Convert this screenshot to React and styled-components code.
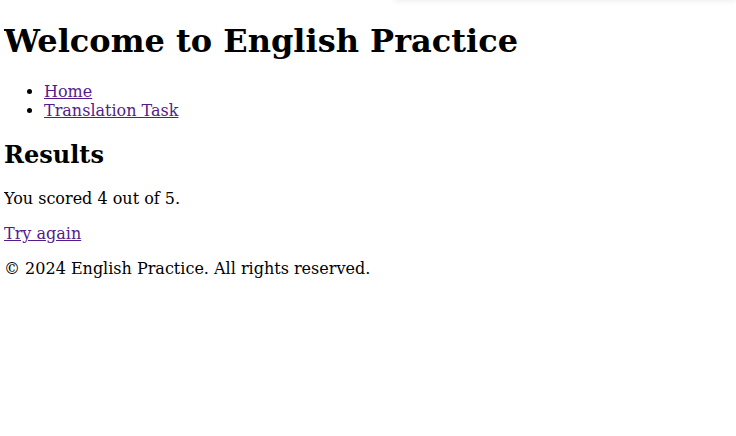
import React from "react"
import styled, { createGlobalStyle } from "styled-components"

const GlobalStyle = createGlobalStyle`
  body {
    margin: 4px;
    font-family: "DejaVu Serif", serif;
    font-size: 16px;
    color: #000;
    background: #fff;
  }
`

const TopShade = styled.div`
  position: fixed;
  top: -40px;
  left: 394px;
  right: 0;
  height: 40px;
  background: #fff;
  box-shadow: 0 1px 6px rgba(0, 0, 0, 0.08);
`

const Title = styled.h1`
  font-size: 32px;
  margin: 18px 0 22px;
`

const Nav = styled.ul`
  margin: 16px 0;
  padding-left: 40px;
`

const SectionTitle = styled.h2`
  font-size: 24px;
  margin: 20px 0;
`

const Para = styled.p`
  margin: 16px 0;
`

const VisitedLink = styled.a`
  color: #551a8b;
  text-decoration: underline;
`

const Footer = styled.footer`
  margin: 16px 0;
`

export default function App() {
  return (
    <>
      <GlobalStyle />
      <TopShade />
      <header>
        <Title>Welcome to English Practice</Title>
        <nav>
          <Nav>
            <li><VisitedLink href="#">Home</VisitedLink></li>
            <li><VisitedLink href="#">Translation Task</VisitedLink></li>
          </Nav>
        </nav>
      </header>
      <main>
        <SectionTitle>Results</SectionTitle>
        <Para>You scored 4 out of 5.</Para>
        <Para><VisitedLink href="#">Try again</VisitedLink></Para>
      </main>
      <Footer>© 2024 English Practice. All rights reserved.</Footer>
    </>
  )
}
